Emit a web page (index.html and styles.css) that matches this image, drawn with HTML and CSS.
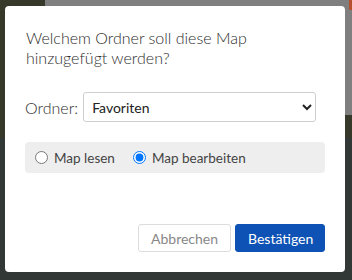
FILE: index.html
```html
<!DOCTYPE html>
<html lang="de">
<head>
<meta charset="utf-8">
<link rel="stylesheet" href="styles.css">
</head>
<body>
<div class="backdrop">
  <div class="bg-grey"></div>
  <div class="bg-orange"></div>
</div>
<div class="dialog">
  <p class="title">Welchem Ordner soll diese Map hinzugefügt werden?</p>
  <div class="field">
    <label class="label" for="ordner">Ordner:</label>
    <select id="ordner" class="select">
      <option>Favoriten</option>
    </select>
  </div>
  <div class="radios">
    <label class="radio"><input type="radio" name="mode"> Map lesen</label>
    <label class="radio"><input type="radio" name="mode" checked> Map bearbeiten</label>
  </div>
  <div class="actions">
    <button class="btn btn-secondary">Abbrechen</button>
    <button class="btn btn-primary">Bestätigen</button>
  </div>
</div>
</body>
</html>
```
FILE: styles.css
```css
html, body {
  margin: 0;
  padding: 0;
  width: 352px;
  height: 280px;
  overflow: hidden;
}
body {
  background: linear-gradient(#36382a 0, #36382a 138px, #323836 138px);
  font-family: "Lato", "Open Sans", sans-serif;
  position: relative;
}
.backdrop {
  position: absolute;
  inset: 0;
}
.bg-grey {
  position: absolute;
  left: 45px;
  top: 0;
  right: 0;
  height: 115px;
  background: #7f7f7f;
}
.bg-orange {
  position: absolute;
  right: 0;
  top: 0;
  width: 3px;
  height: 10px;
  background: #b5512e;
}
.dialog {
  position: absolute;
  left: 5px;
  top: 6px;
  width: 340px;
  height: 266px;
  box-sizing: border-box;
  background: #fff;
  border-radius: 4px;
  padding: 22px 20px 20px 20px;
  display: flex;
  flex-direction: column;
}
.title {
  margin: 0 0 0 1px;
  font-size: 16px;
  font-weight: 300;
  line-height: 20px;
  color: #2e2e2e;
}
.field {
  margin-top: 24px;
  display: flex;
  align-items: center;
  gap: 5px;
}
.label {
  font-size: 16px;
  font-weight: 300;
  color: #2e2e2e;
}
.select {
  flex: 1;
  height: 30px;
  margin-right: 9px;
  border: 1px solid #cfcfcf;
  border-radius: 3px;
  background: #fff;
  font-family: "Lato", sans-serif;
  font-size: 14px;
  color: #222;
  padding: 0 4px;
}
.radios {
  margin-top: 20px;
  height: 31px;
  background: #eeeeee;
  border-radius: 4px;
  display: flex;
  align-items: center;
  padding-left: 9px;
  gap: 17px;
}
.radio {
  display: flex;
  align-items: center;
  font-size: 13.5px;
  color: #444;
}
.radio input {
  margin: 0 6px 0 1px;
  width: 13px;
  height: 13px;
}
.actions {
  margin-top: auto;
  display: flex;
  justify-content: flex-end;
  gap: 4px;
}
.btn {
  height: 28px;
  border-radius: 3px;
  font-family: "Lato", sans-serif;
  font-size: 14px;
  padding: 0 12px;
}
.btn-secondary {
  width: 93px;
  background: #fff;
  border: 1px solid #dcdcdc;
  color: #888;
}
.btn-primary {
  width: 90px;
  background: #0d52b4;
  border: 1px solid #0d52b4;
  color: #fff;
}
```
